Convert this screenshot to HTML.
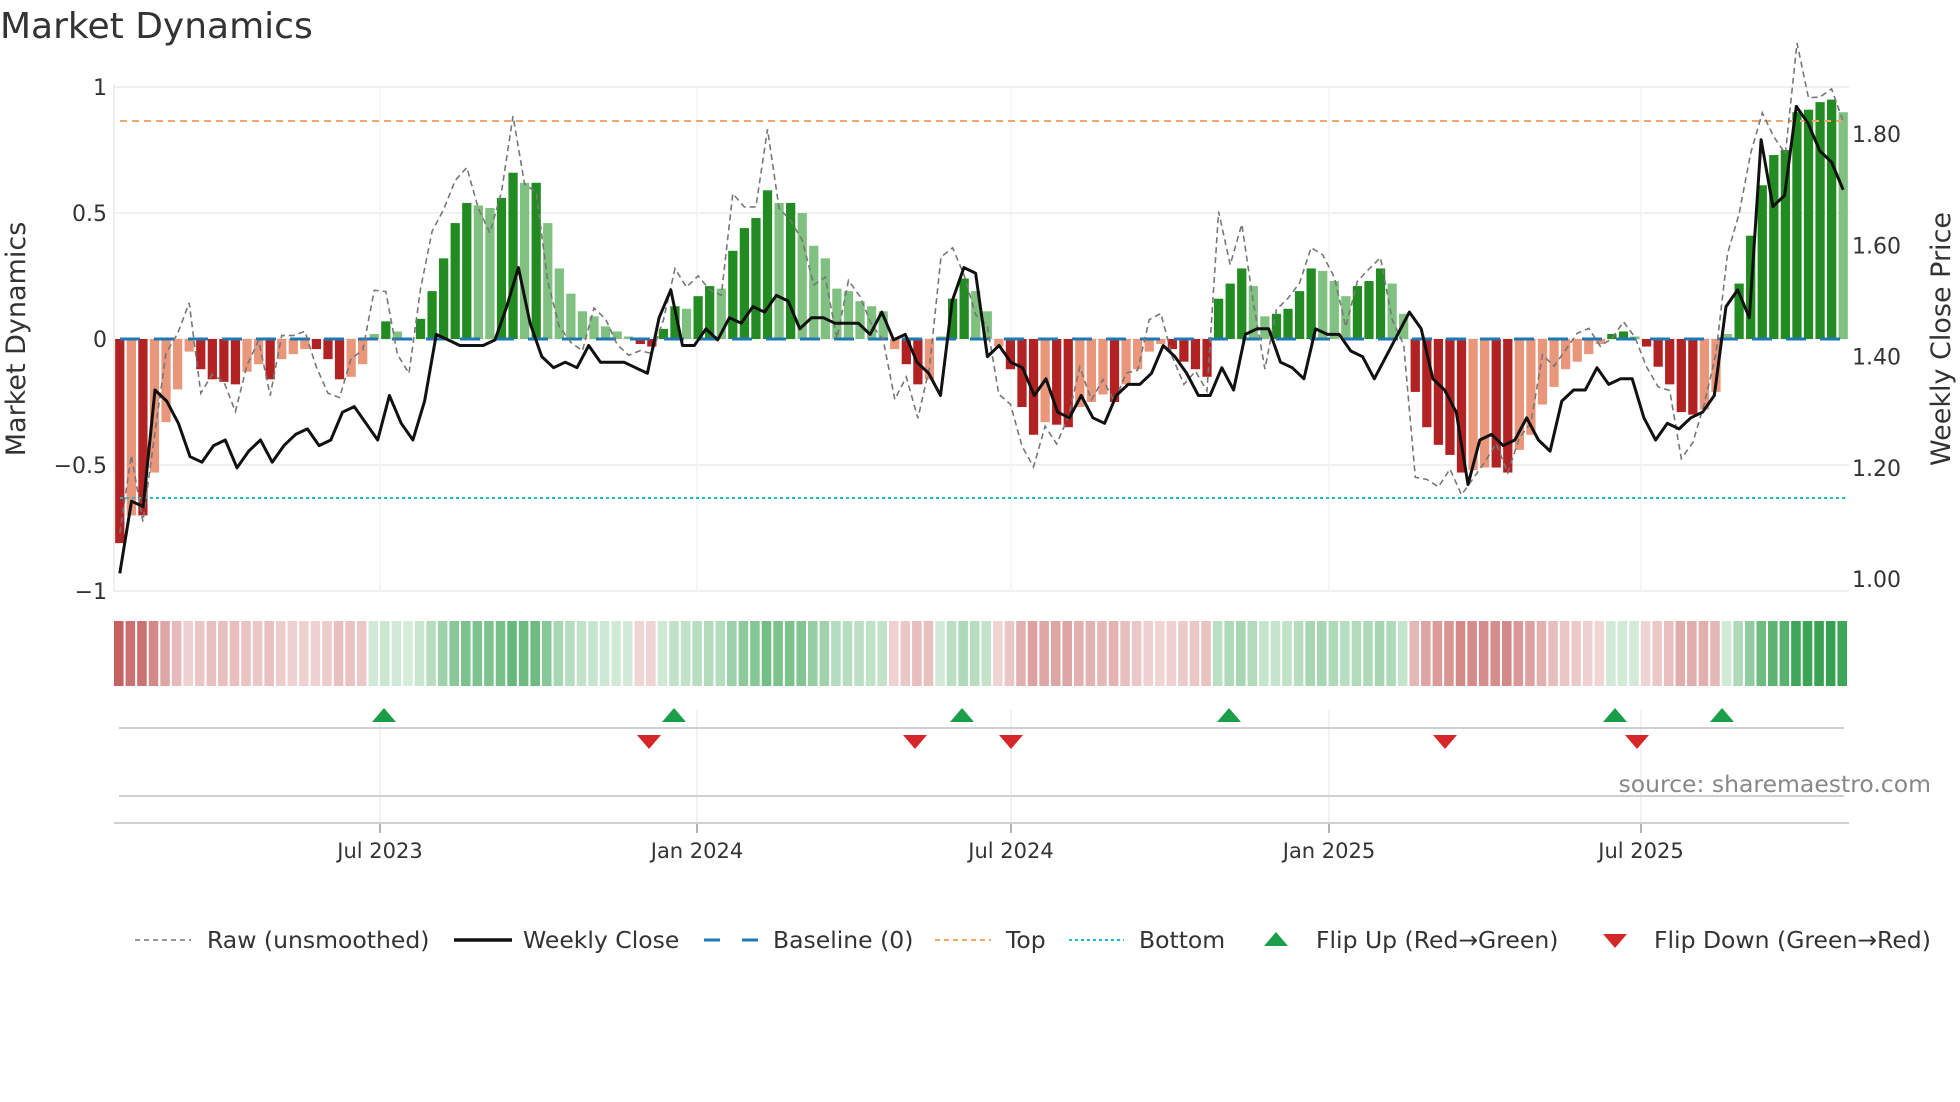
<!DOCTYPE html>
<html><head><meta charset="utf-8"><style>
html,body{margin:0;padding:0;background:#fff;width:1960px;height:1102px;overflow:hidden}
svg{display:block;font-family:"DejaVu Sans","Liberation Sans",sans-serif}
</style></head><body>
<svg id="s" width="1960" height="1102" viewBox="0 0 1960 1102" xmlns="http://www.w3.org/2000/svg">
<text x="0" y="38" font-size="36" fill="#333">Market Dynamics</text>
</svg>
<script>
const NS="http://www.w3.org/2000/svg",S=document.getElementById('s');
function el(t,a,txt){const e=document.createElementNS(NS,t);for(const k in a)e.setAttribute(k,a[k]);if(txt!==undefined)e.textContent=txt;S.appendChild(e);return e;}
const V=[-0.81,-0.70,-0.70,-0.53,-0.33,-0.2,-0.05,-0.12,-0.16,-0.17,-0.18,-0.13,-0.10,-0.16,-0.08,-0.06,-0.04,-0.04,-0.08,-0.16,-0.15,-0.10,
0.02,0.07,0.03,0.0,0.08,0.19,0.32,0.46,0.54,0.53,0.52,0.56,0.66,0.62,0.62,0.46,0.28,0.18,0.11,0.09,0.05,0.03,0.01,-0.02,-0.03,
0.04,0.13,0.12,0.17,0.21,0.20,0.35,0.44,0.48,0.59,0.54,0.54,0.50,0.37,0.32,0.20,0.19,0.15,0.13,0.11,
-0.04,-0.10,-0.18,-0.16,0.01,0.16,0.24,0.19,0.11,
-0.03,-0.12,-0.27,-0.38,-0.33,-0.34,-0.35,-0.27,-0.25,-0.22,-0.25,-0.18,-0.12,-0.05,-0.02,-0.04,-0.09,-0.12,-0.15,
0.16,0.22,0.28,0.21,0.09,0.10,0.12,0.19,0.28,0.27,0.23,0.17,0.21,0.23,0.28,0.22,0.10,
-0.21,-0.35,-0.42,-0.46,-0.53,-0.52,-0.51,-0.51,-0.53,-0.44,-0.38,-0.26,-0.19,-0.12,-0.09,-0.06,-0.02,
0.02,0.03,0.01,-0.03,-0.11,-0.18,-0.29,-0.30,-0.28,-0.21,
0.02,0.22,0.41,0.61,0.73,0.75,0.90,0.91,0.94,0.95,0.90];
const P=[1.01,1.14,1.13,1.34,1.32,1.28,1.22,1.21,1.24,1.25,1.20,1.23,1.25,1.21,1.24,1.26,1.27,1.24,1.25,1.30,1.31,1.28,1.25,1.33,1.28,1.25,1.32,1.44,1.43,1.42,1.42,1.42,1.43,1.49,1.56,1.46,1.40,1.38,1.39,1.38,1.42,1.39,1.39,1.39,1.38,1.37,1.47,1.52,1.42,1.42,1.45,1.43,1.47,1.46,1.49,1.48,1.51,1.50,1.45,1.47,1.47,1.46,1.46,1.46,1.44,1.48,1.43,1.44,1.39,1.37,1.33,1.50,1.56,1.55,1.40,1.42,1.39,1.38,1.33,1.36,1.30,1.29,1.33,1.29,1.28,1.33,1.35,1.35,1.37,1.42,1.40,1.37,1.33,1.33,1.38,1.34,1.44,1.45,1.45,1.39,1.38,1.36,1.45,1.44,1.44,1.41,1.40,1.36,1.40,1.44,1.48,1.45,1.36,1.34,1.30,1.17,1.25,1.26,1.24,1.25,1.29,1.25,1.23,1.32,1.34,1.34,1.38,1.35,1.36,1.36,1.29,1.25,1.28,1.27,1.29,1.30,1.33,1.49,1.52,1.47,1.79,1.67,1.69,1.85,1.82,1.77,1.75,1.70];
const X0=114,X1=1849,N=V.length,st=(X1-X0)/N;
const yv=v=>339-252*v, yp=p=>579-556*(p-1);
[1,0.5,0,-0.5,-1].forEach(v=>el('line',{x1:X0,x2:X1,y1:yv(v),y2:yv(v),stroke:'#ececec','stroke-width':1.5}));
[380,697,1011,1329,1641].forEach(x=>{el('line',{x1:x,x2:x,y1:87,y2:591,stroke:'#f1f1f4','stroke-width':1.2});el('line',{x1:x,x2:x,y1:710,y2:823,stroke:'#e8e8ee','stroke-width':1.2});el('line',{x1:x,x2:x,y1:823,y2:833,stroke:'#999','stroke-width':1.5});});
el('line',{x1:X0,x2:X0,y1:85,y2:591,stroke:'#e4e4e4','stroke-width':1.2});
for(let i=0;i<N;i++){const v=V[i],pv=i?V[i-1]:0;const dark=Math.abs(v)>=Math.abs(pv);
let c=v>=0?(dark?'#228b22':'#80c080'):(dark?'#b22222':'#e9967a');
const y=Math.min(yv(v),339),h=Math.abs(yv(v)-339);
el('rect',{x:X0+i*st+st*0.1,y:y,width:st*0.8,height:Math.max(h,1),fill:c});
el('rect',{x:X0+i*st,y:621,width:st-2,height:65,fill:v>=0?'#2e9e4a':'#b83a3a','fill-opacity':(v>=0?0.2+0.8*Math.min(1,Math.abs(v)):0.2+0.6*Math.min(1,Math.abs(v)/0.8)).toFixed(2)});
}
el('line',{x1:120,x2:1845,y1:121,y2:121,stroke:'#f0a868','stroke-width':2,'stroke-dasharray':'7 5'});
el('line',{x1:120,x2:1845,y1:498,y2:498,stroke:'#17becf','stroke-width':2,'stroke-dasharray':'3 3'});
el('line',{x1:120,x2:1845,y1:339,y2:339,stroke:'#1f77b4','stroke-width':3,'stroke-dasharray':'20 14'});
let r='',q='';
for(let i=0;i<N;i++){const x=X0+i*st+st/2;const d=V[i]-(i?V[i-1]:V[i]);const raw=V[i]+d*1.4+0.06*Math.sin(i*1.7)+0.04*Math.cos(i*0.9);r+=(i?'L':'M')+x.toFixed(1)+' '+yv(raw).toFixed(1);}
for(let i=0;i<P.length;i++){const x=X0+st/2+i*(X1-X0-st)/(P.length-1);q+=(i?'L':'M')+x.toFixed(1)+' '+yp(P[i]).toFixed(1);}
el('path',{d:r,fill:'none',stroke:'#777','stroke-width':1.6,'stroke-dasharray':'6 4'});
el('path',{d:q,fill:'none',stroke:'#111','stroke-width':3,'stroke-linejoin':'round'});
[['1',1],['0.5',0.5],['0',0],['\u22120.5',-0.5],['\u22121',-1]].forEach(t=>el('text',{x:107,y:yv(t[1])+8,'font-size':22,fill:'#333','text-anchor':'end'},t[0]));
[['1.80',1.8],['1.60',1.6],['1.40',1.4],['1.20',1.2],['1.00',1.0]].forEach(t=>el('text',{x:1852,y:yp(t[1])+8,'font-size':22,fill:'#333'},t[0]));
el('text',{x:0,y:0,'font-size':27,fill:'#333','text-anchor':'middle',transform:'translate(25,339) rotate(-90)'},'Market Dynamics');
el('text',{x:0,y:0,'font-size':27,fill:'#333','text-anchor':'middle',transform:'translate(1950,339) rotate(-90)'},'Weekly Close Price');
el('line',{x1:119,x2:1844,y1:728,y2:728,stroke:'#d0d0d0','stroke-width':2});
el('line',{x1:119,x2:1844,y1:796,y2:796,stroke:'#d0d0d0','stroke-width':2});
el('line',{x1:114,x2:1849,y1:823,y2:823,stroke:'#d0d0d0','stroke-width':2});
[384,674,962,1229,1615,1722].forEach(x=>el('path',{d:`M${x-12} 722L${x+12} 722L${x} 708Z`,fill:'#1a9e48'}));
[649,915,1011,1445,1637].forEach(x=>el('path',{d:`M${x-12} 735L${x+12} 735L${x} 749Z`,fill:'#d62728'}));
el('text',{x:1931,y:792,'font-size':23.5,fill:'#888','text-anchor':'end'},'source: sharemaestro.com');
[['Jul 2023',380],['Jan 2024',697],['Jul 2024',1011],['Jan 2025',1329],['Jul 2025',1641]].forEach(t=>el('text',{x:t[1],y:858,'font-size':21,fill:'#333','text-anchor':'middle'},t[0]));
const LY=940,FS=23.5;
el('line',{x1:135,x2:191,y1:LY,y2:LY,stroke:'#777','stroke-width':1.6,'stroke-dasharray':'5 4'});
el('text',{x:207,y:LY+8,'font-size':FS,fill:'#333'},'Raw (unsmoothed)');
el('line',{x1:454,x2:512,y1:LY,y2:LY,stroke:'#111','stroke-width':3.5});
el('text',{x:523,y:LY+8,'font-size':FS,fill:'#333'},'Weekly Close');
el('line',{x1:704,x2:758,y1:LY,y2:LY,stroke:'#1f77b4','stroke-width':3,'stroke-dasharray':'16 22'});
el('text',{x:773,y:LY+8,'font-size':FS,fill:'#333'},'Baseline (0)');
el('line',{x1:935,x2:991,y1:LY,y2:LY,stroke:'#f0a868','stroke-width':2,'stroke-dasharray':'5 4'});
el('text',{x:1006,y:LY+8,'font-size':FS,fill:'#333'},'Top');
el('line',{x1:1069,x2:1124,y1:LY,y2:LY,stroke:'#17becf','stroke-width':2,'stroke-dasharray':'3 3'});
el('text',{x:1139,y:LY+8,'font-size':FS,fill:'#333'},'Bottom');
el('path',{d:`M1264 946L1288 946L1276 932Z`,fill:'#1a9e48'});
el('text',{x:1316,y:LY+8,'font-size':FS,fill:'#333'},'Flip Up (Red\u2192Green)');
el('path',{d:`M1603 934L1627 934L1615 948Z`,fill:'#d62728'});
el('text',{x:1654,y:LY+8,'font-size':FS,fill:'#333'},'Flip Down (Green\u2192Red)');
</script>
</body></html>
